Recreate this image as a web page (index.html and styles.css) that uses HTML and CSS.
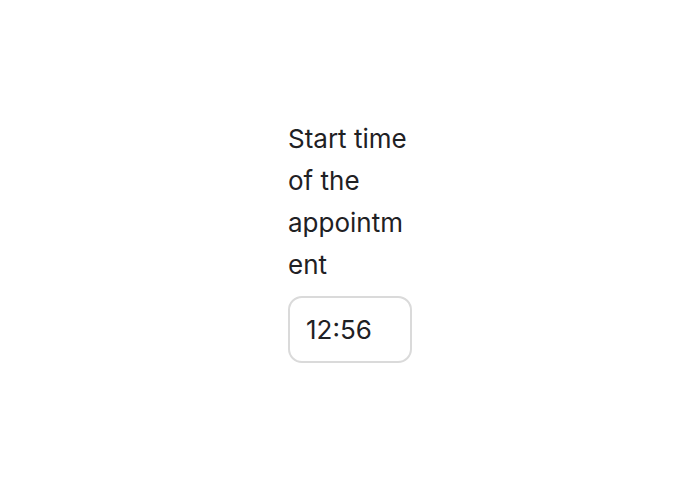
FILE: index.html
```html
<!DOCTYPE html>
<html>
<head>
<meta charset="utf-8">
<link rel="stylesheet" href="styles.css">
</head>
<body>
<div class="page">
  <div class="field">
    <label class="label" for="t">Start time of the appointment</label>
    <div class="input">12:56</div>
  </div>
</div>
</body>
</html>
```
FILE: styles.css
```css
html, body { margin: 0; padding: 0; background: #fff; }
.page {
  width: 700px;
  height: 480px;
  display: flex;
  align-items: center;
  justify-content: center;
  font-family: Inter, "Noto Sans", sans-serif;
  color: #1f2124;
}
.field {
  width: 124px;
  display: flex;
  flex-direction: column;
  gap: 10px;
}
.label {
  font-size: 26px;
  line-height: 42px;
  overflow-wrap: anywhere;
}
.input {
  box-sizing: border-box;
  width: 124px;
  height: 67px;
  border: 2px solid #dadada;
  border-radius: 14px;
  padding: 0 16px;
  display: flex;
  align-items: center;
  font-size: 26px;
}
```
